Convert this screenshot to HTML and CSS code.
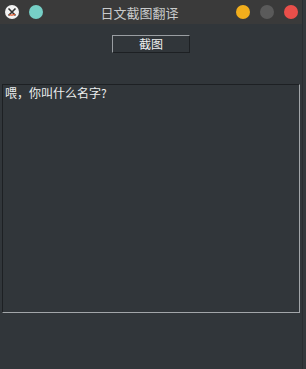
FILE: index.html
```html
<!DOCTYPE html>
<html lang="zh">
<head>
    <meta charset="UTF-8">
    <meta name="viewport" content="width=device-width, initial-scale=1.0">
    <title>日文截图翻译</title>
    <link rel="stylesheet" href="styles.css">
</head>
<body>

<div class="window">
    <div class="titlebar">
        <div class="title-left">
            <span class="app-icon">
                <svg width="14" height="14" viewBox="0 0 14 14">
                    <circle cx="7" cy="7" r="7" fill="#f2f2f2"/>
                    <path d="M3.5 3.5 L10.5 10.5 M10.5 3.5 L3.5 10.5" stroke="#333" stroke-width="1.6"/>
                    <path d="M4 9.5 Q7 11 10 9" stroke="#e2572b" stroke-width="1.3" fill="none"/>
                </svg>
            </span>
            <span class="dot teal"></span>
        </div>
        <div class="title">日文截图翻译</div>
        <div class="title-right">
            <span class="dot orange"></span>
            <span class="dot gray"></span>
            <span class="dot red"></span>
        </div>
    </div>

    <div class="content">
        <div class="toolbar">
            <button class="shot-button">截图</button>
        </div>
        <div class="result">喂，你叫什么名字?</div>
    </div>
</div>
<div class="desktop-edge"></div>

</body>
</html>
```

FILE: styles.css
```css
body {
    font-family: "Noto Sans CJK SC", "DejaVu Sans", sans-serif;
    margin: 0;
    padding: 0;
    width: 306px;
    height: 369px;
    display: flex;
    background-color: #2f3336;
    overflow: hidden;
}

.window {
    width: 302px;
    height: 369px;
    display: flex;
    flex-direction: column;
    background-color: #31363a;
}

.desktop-edge {
    width: 4px;
    height: 369px;
    background-color: #34383c;
    border-left: 1px solid #2a2d30;
    box-sizing: border-box;
}

.titlebar {
    height: 24px;
    flex-shrink: 0;
    background-color: #3a3a3a;
    display: flex;
    align-items: center;
    padding: 0 4px 0 5px;
}

.title-left,
.title-right {
    display: flex;
    align-items: center;
    gap: 10px;
}

.app-icon {
    width: 14px;
    height: 14px;
    display: flex;
}

.dot {
    width: 14px;
    height: 14px;
    border-radius: 50%;
    display: inline-block;
}

.teal {
    background-color: #76cfc6;
}

.orange {
    background-color: #f2ae1c;
}

.gray {
    background-color: #5a5a5a;
}

.red {
    background-color: #ea4f4a;
}

.title {
    flex: 1;
    text-align: center;
    color: #c9cbcc;
    font-size: 13px;
}

.content {
    flex: 1;
    display: flex;
    flex-direction: column;
}

.toolbar {
    height: 59px;
    display: flex;
    justify-content: center;
    align-items: flex-start;
    padding-top: 11px;
    box-sizing: border-box;
}

.shot-button {
    width: 78px;
    height: 18px;
    padding: 0;
    font-family: inherit;
    font-size: 12px;
    line-height: 14px;
    color: #eef0f0;
    background-color: #31363a;
    border-top: 1px solid #9a9ea2;
    border-left: 1px solid #9a9ea2;
    border-bottom: 1px solid #1d2023;
    border-right: 1px solid #1d2023;
}

.result {
    margin: 1px 2px 0 2px;
    height: 229px;
    box-sizing: border-box;
    padding: 1px 2px;
    font-size: 12px;
    line-height: 14px;
    color: #eceeef;
    background-color: #31363a;
    border-top: 1px solid #1d2023;
    border-left: 1px solid #1d2023;
    border-bottom: 1px solid #a2a6a9;
    border-right: 1px solid #a2a6a9;
}
```
